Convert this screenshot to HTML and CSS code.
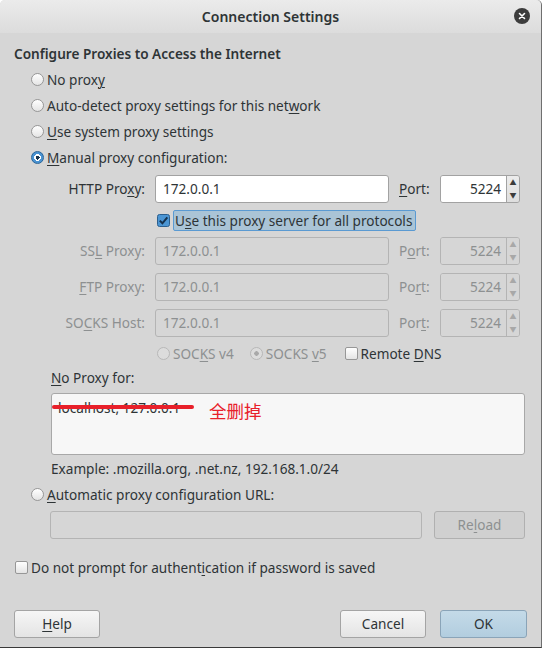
FILE: index.html
```html
<!DOCTYPE html>
<html lang="en">
<head>
    <meta charset="UTF-8">
    <title>Connection Settings</title>
    <link rel="stylesheet" href="styles.css">
</head>
<body>
    <div class="dialog">
        <div class="titlebar">
            <span class="title">Connection Settings</span>
            <span class="close">
                <svg width="16" height="16" viewBox="0 0 16 16"><circle cx="8" cy="8" r="8" fill="#3c3c3c"/><path d="M5.5 5.5l5 5M10.5 5.5l-5 5" stroke="#fff" stroke-width="1.6" stroke-linecap="round"/></svg>
            </span>
        </div>

        <div class="content">
            <div class="heading">Configure Proxies to Access the Internet</div>

            <div class="options">
                <div class="opt"><i class="radio"></i><span>No prox<u>y</u></span></div>
                <div class="opt"><i class="radio"></i><span>Auto-detect proxy settings for this net<u>w</u>ork</span></div>
                <div class="opt"><i class="radio"></i><span><u>U</u>se system proxy settings</span></div>
                <div class="opt"><i class="radio on"></i><span><u>M</u>anual proxy configuration:</span></div>
            </div>

            <div class="proxy-grid">
                <span class="lbl">HTTP Pro<u>x</u>y:</span>
                <div class="field">172.0.0.1</div>
                <span class="lbl port"><u>P</u>ort:</span>
                <div class="spin"><span class="spin-val">5224</span><span class="spin-btns"><b>&#9650;</b><b>&#9660;</b></span></div>

                <div class="all-protocols">
                    <i class="check on">
                        <svg width="13" height="13" viewBox="0 0 13 13"><rect x="0.5" y="0.5" width="12" height="12" rx="2" fill="#4b95d3" stroke="#2c5f8e"/><path d="M2.8 6.6l2.6 2.7 4.9-6" fill="none" stroke="#15314d" stroke-width="2"/></svg>
                    </i>
                    <span class="focus">U<u>s</u>e this proxy server for all protocols</span>
                </div>

                <span class="lbl off">SS<u>L</u> Proxy:</span>
                <div class="field off">172.0.0.1</div>
                <span class="lbl port off">P<u>o</u>rt:</span>
                <div class="spin off"><span class="spin-val">5224</span><span class="spin-btns"><b>&#9650;</b><b>&#9660;</b></span></div>

                <span class="lbl off"><u>F</u>TP Proxy:</span>
                <div class="field off">172.0.0.1</div>
                <span class="lbl port off">Po<u>r</u>t:</span>
                <div class="spin off"><span class="spin-val">5224</span><span class="spin-btns"><b>&#9650;</b><b>&#9660;</b></span></div>

                <span class="lbl off">SO<u>C</u>KS Host:</span>
                <div class="field off">172.0.0.1</div>
                <span class="lbl port off">Por<u>t</u>:</span>
                <div class="spin off"><span class="spin-val">5224</span><span class="spin-btns"><b>&#9650;</b><b>&#9660;</b></span></div>

                <div class="socks-ver">
                    <span class="opt off"><i class="radio"></i><span>SOC<u>K</u>S v4</span></span>
                    <span class="opt off v5"><i class="radio dot"></i><span>SOCKS <u>v</u>5</span></span>
                    <span class="opt dns"><i class="check"></i><span>Remote <u>D</u>NS</span></span>
                </div>
            </div>

            <div class="noproxy">
                <div class="noproxy-lbl"><u>N</u>o Proxy for:</div>
                <div class="textarea">
                    localhost, 127.0.0.1
                    <span class="strike"></span>
                    <span class="note">全删掉</span>
                </div>
                <div class="example">Example: .mozilla.org, .net.nz, 192.168.1.0/24</div>
            </div>

            <div class="opt auto"><i class="radio"></i><span><u>A</u>utomatic proxy configuration URL:</span></div>
            <div class="url-row">
                <div class="field off url"></div>
                <div class="btn off">Re<u>l</u>oad</div>
            </div>

            <div class="opt nologin"><i class="check"></i><span>Do not prompt for authent<u>i</u>cation if password is saved</span></div>

            <div class="buttons">
                <div class="btn"><u>H</u>elp</div>
                <div class="spacer"></div>
                <div class="btn">Cancel</div>
                <div class="btn default">OK</div>
            </div>
        </div>
    </div>
</body>
</html>
```

FILE: styles.css
```css
html, body {
    margin: 0;
    background: #ffffff;
}
body {
    font-family: "Noto Sans", "Noto Sans CJK SC", sans-serif;
    font-size: 13.6px;
    color: #2e3436;
}
u {
    text-decoration-thickness: 1px;
    text-underline-offset: 2px;
}
.dialog {
    width: 541px;
    height: 647px;
    background: #d6d6d6;
    border-right: 1px solid #6f6f6f;
    border-bottom: 1px solid #3a3a3a;
    border-radius: 5px 5px 0 0;
    display: flex;
    flex-direction: column;
}
.titlebar {
    height: 33px;
    display: flex;
    align-items: center;
    justify-content: center;
    position: relative;
    border-radius: 5px 5px 0 0;
    background: linear-gradient(#ebebeb, #dcdcdc);
}
.title {
    font-weight: 600;
    font-size: 14px;
    color: #2e3436;
}
.close {
    position: absolute;
    right: 11px;
    top: 8px;
    height: 16px;
}
.content {
    padding-left: 14px;
    display: flex;
    flex-direction: column;
}
.heading {
    margin-top: 11px;
    line-height: 20px;
    font-weight: 600;
}
.options {
    margin-top: 2px;
    margin-left: 17px;
}
.opt {
    display: flex;
    align-items: center;
    height: 26px;
    white-space: nowrap;
}
.radio, .check {
    display: inline-block;
    flex: none;
    width: 11px;
    height: 11px;
    margin-right: 3px;
    border: 1px solid #979797;
    border-radius: 50%;
    background: linear-gradient(#ffffff, #e4e4e4);
}
.radio.on {
    border-color: #2a6598;
    background: radial-gradient(circle, #17324d 0 2px, #ffffff 2px 3.2px, #4a93d2 3.4px);
}
.check {
    border-radius: 2px;
    width: 11px;
    height: 11px;
}
.check.on {
    border: none;
    width: 13px;
    height: 13px;
    background: none;
}
.check.on svg {
    display: block;
}

/* manual proxy grid */
.proxy-grid {
    margin-left: 37px;
    margin-top: 5px;
    display: grid;
    grid-template-columns: 94px 234px 31px 80px;
    grid-template-rows: 28px 34px 36px 36px 36px 16px;
    column-gap: 10px;
}
.lbl {
    justify-self: end;
    align-self: start;
    line-height: 28px;
    white-space: nowrap;
}
.lbl.port {
    justify-self: start;
}
.off {
    color: #8d9091;
}
.field {
    height: 26px;
    line-height: 26px;
    padding-left: 7px;
    background: #ffffff;
    border: 1px solid #a2a2a2;
    border-radius: 3px;
}
.field.off {
    background: #d6d6d6;
    border-color: #b4b4b4;
}
.spin {
    display: flex;
    height: 28px;
    box-sizing: border-box;
    border: 1px solid #a2a2a2;
    border-radius: 3px;
    overflow: hidden;
}
.spin-val {
    flex: 1;
    background: #ffffff;
    text-align: right;
    padding-right: 5px;
    line-height: 26px;
    border-right: 1px solid #a2a2a2;
}
.spin-btns {
    width: 12px;
    display: flex;
    flex-direction: column;
    justify-content: space-around;
    align-items: center;
    background: linear-gradient(#ececec, #dedede);
    color: #3c3c3c;
}
.spin-btns b {
    font-size: 7px;
    line-height: 8px;
    font-weight: normal;
}
.spin.off {
    border-color: #b4b4b4;
}
.spin.off .spin-val {
    background: #d6d6d6;
    border-color: #b4b4b4;
}
.spin.off .spin-btns {
    background: #d6d6d6;
    color: #a8a8a8;
}
.all-protocols {
    grid-column: 2 / 5;
    display: flex;
    align-items: center;
    padding-left: 2px;
    height: 34px;
}
.all-protocols .check {
    margin-right: 3px;
}
.focus {
    height: 19px;
    line-height: 19px;
    padding: 0 3px 0 1px;
    white-space: nowrap;
    background: #aac4d6;
    border: 1px solid #5a9ad2;
    border-radius: 2px;
}
.socks-ver {
    grid-column: 2 / 5;
    display: flex;
    align-items: center;
    padding-left: 2px;
}
.socks-ver .opt {
    height: 16px;
}
.socks-ver .radio {
    border-color: #b8b8b8;
    background: #dcdcdc;
}
.socks-ver .radio.dot {
    background: radial-gradient(circle, #a9a9a9 0 2px, #dcdcdc 2.5px);
}
.socks-ver .v5 {
    margin-left: 16px;
}
.socks-ver .dns {
    margin-left: 18px;
}

/* no proxy */
.noproxy {
    margin-left: 37px;
}
.noproxy-lbl {
    margin-top: 7px;
    line-height: 20px;
}
.textarea {
    position: relative;
    margin-top: 5px;
    width: 466px;
    height: 60px;
    padding-left: 6px;
    line-height: 28px;
    background: #f7f7f7;
    border: 1px solid #a8a8a8;
    border-radius: 3px;
}
.strike {
    position: absolute;
    left: 0;
    top: 11px;
    width: 142px;
    height: 4px;
    border-radius: 2px;
    background: #e8202a;
}
.note {
    position: absolute;
    left: 157px;
    top: 3px;
    color: #e8202a;
    font-size: 17.5px;
    line-height: 28px;
    font-family: "Noto Sans CJK SC", sans-serif;
}
.example {
    margin-top: 4px;
    line-height: 20px;
}
.opt.auto {
    margin-top: 5px;
    margin-left: 17px;
    height: 20px;
}
.url-row {
    margin-top: 7px;
    margin-left: 36px;
    display: flex;
    gap: 12px;
}
.url {
    width: 370px;
    padding: 0;
}
.btn {
    box-sizing: border-box;
    height: 28px;
    line-height: 26px;
    text-align: center;
    border: 1px solid #a4a4a4;
    border-radius: 3px;
    background: linear-gradient(#f6f6f6, #e4e4e4);
}
.url-row .btn {
    width: 91px;
    background: #d0d0d0;
    border-color: #b0b0b0;
}
.opt.nologin {
    margin-top: 18px;
    margin-left: 1px;
    height: 20px;
}
.buttons {
    margin-top: 33px;
    padding-right: 14px;
    display: flex;
    gap: 14px;
}
.buttons .btn {
    width: 86px;
}
.buttons .btn.default {
    width: 87px;
    background: linear-gradient(#c4dae8, #b2cddf);
    border-color: #8aa4b8;
}
.spacer {
    flex: 1;
}
```
